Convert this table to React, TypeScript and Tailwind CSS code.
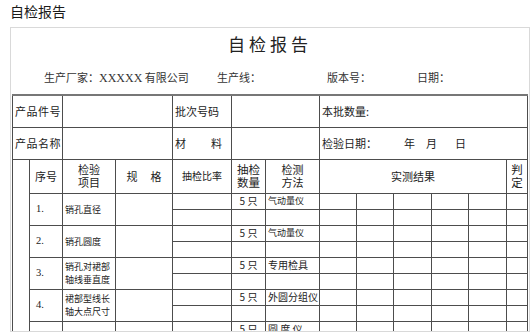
import React from "react";

const cjk = { fontFamily: '"Noto Sans CJK SC", "Noto Sans", sans-serif' };

const items = [
  { no: "1.", name: ["销孔直径"], method: "气动量仪", mcls: "text-[9px]" },
  { no: "2.", name: ["销孔圆度"], method: "气动量仪", mcls: "text-[9px]" },
  { no: "3.", name: ["销孔对裙部", "轴线垂直度"], method: "专用检具", mcls: "text-[10px]" },
  { no: "4.", name: ["裙部型线长", "轴大点尺寸"], method: "外圆分组仪", mcls: "text-[10px]" },
  { no: "", name: [""], method: "圆 度 仪", mcls: "text-[10px]" },
];

const td = "border border-[#4d4d4d] p-0";

const App = () => {
  return (
    <div className="w-[530px] h-[332px] overflow-hidden bg-white text-[#222]" style={cjk}>
      {/* page title */}
      <div className="pl-[10px] pt-[1px] h-[27px] text-[14px] leading-[20px] text-[#1a1a1a]">自检报告</div>

      {/* report card */}
      <div className="ml-[10px] w-[520px] h-[305px] border border-[#d9d9d9] overflow-hidden">
        <div className="h-[32px] pt-[5px] text-center text-[17px] leading-[22px] tracking-[4px] text-[#222]">自检报告</div>
        <div className="flex h-[34px] items-center pl-[33px] text-[11px] leading-[14px] text-[#333]">
          <span className="w-[173px]">
            生产厂家：<span className="text-[12px]" style={{ fontFamily: '"Liberation Serif", serif' }}>XXXXX</span> 有限公司
          </span>
          <span className="w-[110px]">生产线：</span>
          <span className="w-[90px]">版本号：</span>
          <span>日期：</span>
        </div>

        <table className="ml-[1px] w-[516px] table-fixed border-collapse border-t-2 border-t-[#777] text-[11px] leading-[14px] text-[#222]">
          <colgroup>
            <col className="w-[17px]" />
            <col className="w-[33px]" />
            <col className="w-[53px]" />
            <col className="w-[57px]" />
            <col className="w-[59px]" />
            <col className="w-[34px]" />
            <col className="w-[54px]" />
            <col className="w-[37px]" />
            <col className="w-[37px]" />
            <col className="w-[38px]" />
            <col className="w-[37px]" />
            <col className="w-[38px]" />
            <col className="w-[21px]" />
          </colgroup>
          <tbody>
            <tr className="h-[32px]">
              <td colSpan={2} className={`${td} pl-[2px] tracking-[0.5px]`}>产品件号</td>
              <td colSpan={2} className={td}></td>
              <td className={`${td} pl-[2px]`}>批次号码</td>
              <td colSpan={2} className={td}></td>
              <td colSpan={6} className={`${td} pl-[2px]`}>本批数量:</td>
            </tr>
            <tr className="h-[32px]">
              <td colSpan={2} className={`${td} pl-[2px] tracking-[0.5px]`}>产品名称</td>
              <td colSpan={2} className={td}></td>
              <td className={`${td} pl-[2px]`}>
                <span className="inline-block w-[36px]">材</span>料
              </td>
              <td colSpan={2} className={td}></td>
              <td colSpan={6} className={`${td} pl-[2px]`}>
                <span className="inline-block w-[82px]">检验日期：</span>
                <span className="inline-block w-[22px]">年</span>
                <span className="inline-block w-[29px]">月</span>日
              </td>
            </tr>
            <tr className="h-[34px] text-center">
              <td rowSpan={11} className={td}></td>
              <td className={td}>序号</td>
              <td className={`${td} leading-[13px]`}>检验<br />项目</td>
              <td className={td}>
                <span className="inline-block w-[24px] text-left">规</span>格
              </td>
              <td className={`${td} text-[10px]`}>抽检比率</td>
              <td className={`${td} text-[11.5px] leading-[13px]`}>抽检<br />数量</td>
              <td className={`${td} leading-[13px]`}>检测<br />方法</td>
              <td colSpan={5} className={td}>实测结果</td>
              <td className={`${td} text-[11.5px] leading-[13px]`}>判<br />定</td>
            </tr>
            {items.map((it, i) => (
              <React.Fragment key={i}>
                <tr className="h-[16px]">
                  <td rowSpan={2} className={`${td} pl-[6px] text-[10.5px]`} style={{ fontFamily: '"Liberation Serif", serif' }}>
                    {it.no}
                  </td>
                  <td rowSpan={2} className={`${td} pl-[2px] text-[9px] leading-[13px]`}>
                    {it.name.map((n, j) => (
                      <div key={j}>{n}</div>
                    ))}
                  </td>
                  <td rowSpan={2} className={td}></td>
                  <td className={td}></td>
                  <td className={`${td} text-center text-[10px] leading-[12px]`}>5 只</td>
                  <td className={`${td} pl-[2px] ${it.mcls} leading-[12px] whitespace-nowrap`}>{it.method}</td>
                  <td className={td}></td>
                  <td className={td}></td>
                  <td className={td}></td>
                  <td className={td}></td>
                  <td className={td}></td>
                  <td className={td}></td>
                </tr>
                <tr className="h-[16px]">
                  <td className={td}></td>
                  <td className={td}></td>
                  <td className={td}></td>
                  <td className={td}></td>
                  <td className={td}></td>
                  <td className={td}></td>
                  <td className={td}></td>
                  <td className={td}></td>
                  <td className={td}></td>
                </tr>
              </React.Fragment>
            ))}
          </tbody>
        </table>
      </div>
    </div>
  );
};

export default App;
